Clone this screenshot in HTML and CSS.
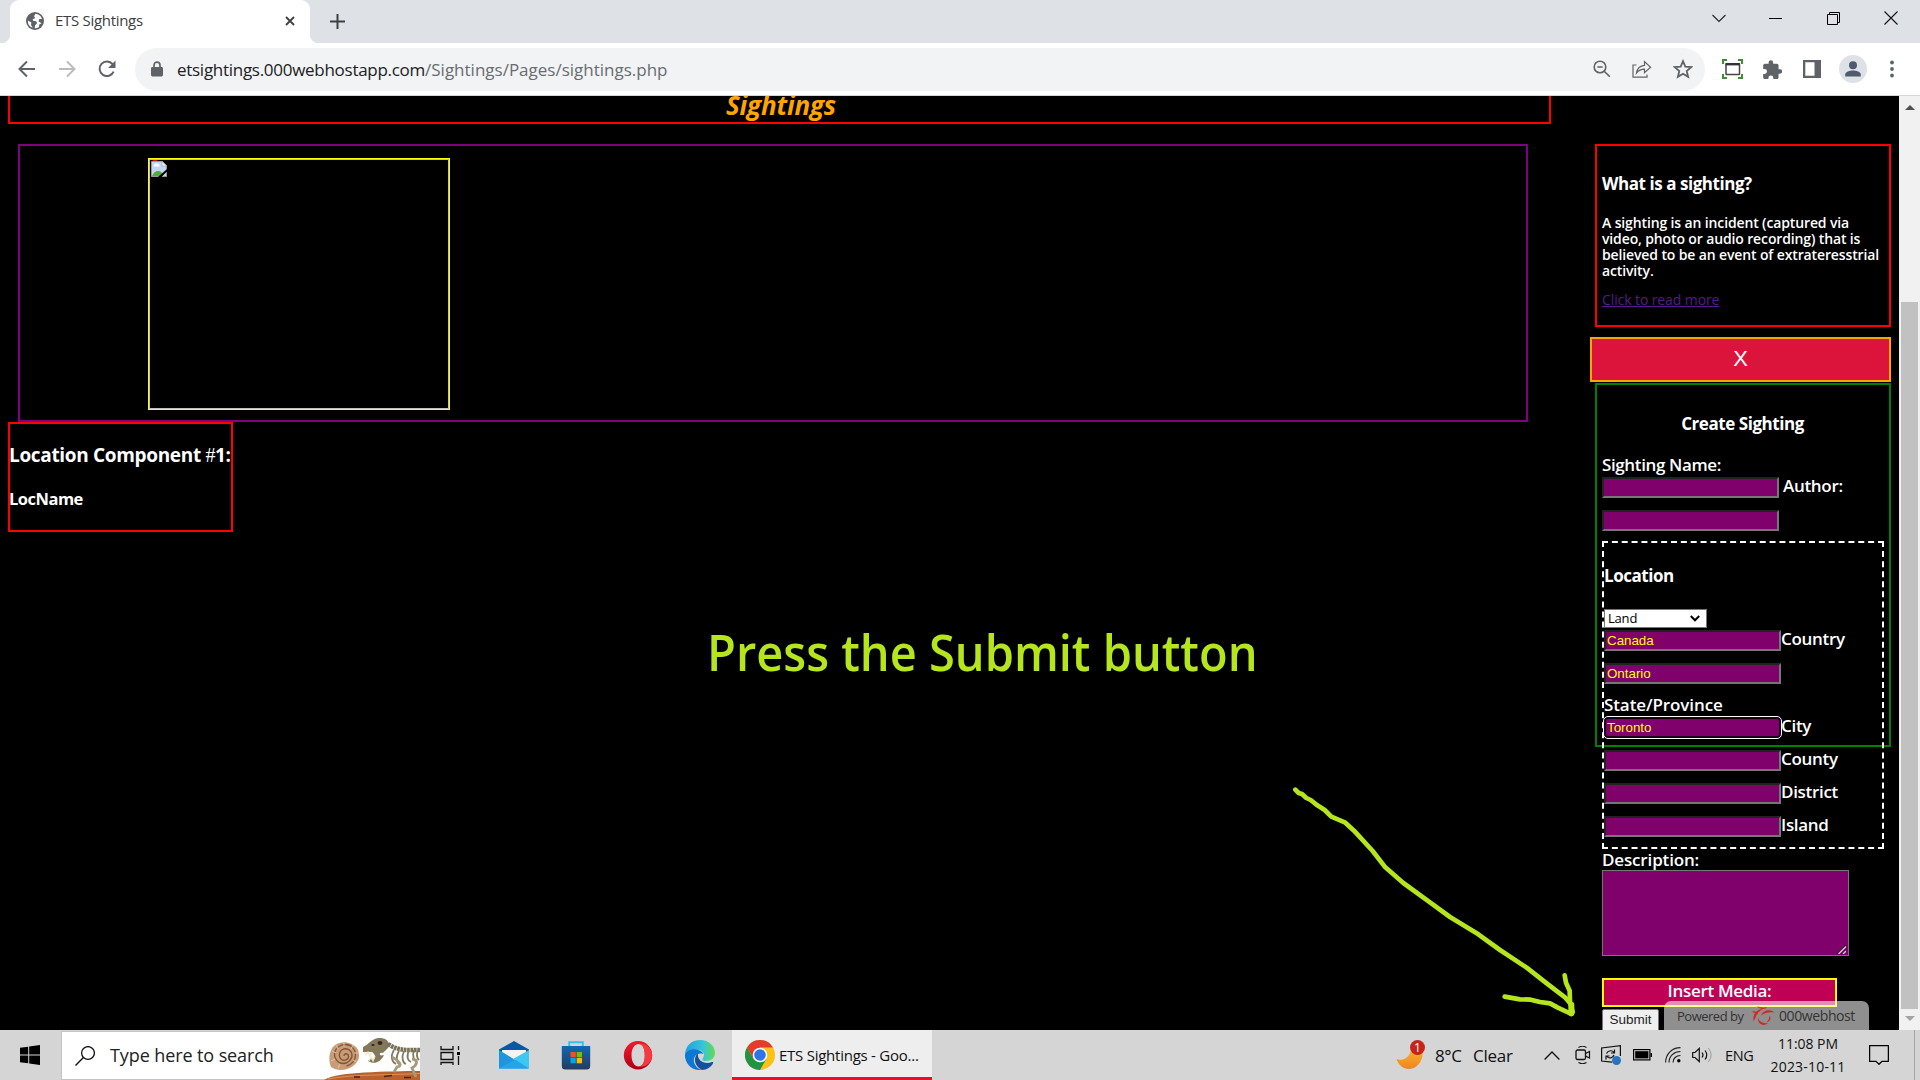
FILE: index.html
```html
<!DOCTYPE html>
<html lang="en">
<head>
<meta charset="utf-8">
<title>ETS Sightings</title>
<link rel="stylesheet" href="styles.css">
</head>
<body>
<div class="screen">
  <header class="tabstrip">
    <div class="tab">
      <svg class="tab-globe" viewBox="0 0 18 18"><circle cx="9" cy="9" r="9" fill="#5f6368"/><path d="M9.5 1.8 8 4.2 9.3 6 6.8 7.2 7 8.8 10 9.2 11.2 11 9 13.4 8.7 16.2A7.2 7.2 0 0 0 13 15L13.2 12.6 15.6 11.2 12.6 9.4 13.2 7 16 7A7.2 7.2 0 0 0 12.3 2.6ZM1.9 8.4 5.3 10.6 5 13 6.8 15.8A7.2 7.2 0 0 1 1.9 8.4Z" fill="#fff"/></svg>
      <span class="tab-title">ETS Sightings</span>
      <svg class="tab-close" viewBox="0 0 10 10"><path d="M1 1 9 9M9 1 1 9" stroke="#3c4043" stroke-width="1.8"/></svg>
    </div>
    <svg class="tab-new" viewBox="0 0 15 15"><path d="M7.5 0V15M0 7.5H15" stroke="#3c4043" stroke-width="2"/></svg>
    <div class="win-buttons">
      <svg width="14" height="14" viewBox="0 0 14 14"><path d="M.5 4 7 10.5 13.5 4" fill="none" stroke="#222" stroke-width="1.1"/></svg>
      <svg width="14" height="14" viewBox="0 0 14 14"><path d="M0 7.5H13" stroke="#000"/></svg>
      <svg width="14" height="14" viewBox="0 0 14 14"><path d="M.5 3.5H10.5V13.5H.5ZM2.5 3.5V1.5H12.5V11.5H10.5" fill="none" stroke="#000"/></svg>
      <svg width="14" height="14" viewBox="0 0 14 14"><path d="M.5 .5 13.5 13.5M13.5 .5 .5 13.5" stroke="#111" stroke-width="1.1"/></svg>
    </div>
  </header>

  <div class="toolbar">
    <svg class="nav-back" viewBox="0 0 18 18"><path d="M17 9H2M9 1.5 1.5 9 9 16.5" fill="none" stroke="#5f6368" stroke-width="2"/></svg>
    <svg class="nav-forward" viewBox="0 0 18 18"><path d="M1 9H16M9 1.5 16.5 9 9 16.5" fill="none" stroke="#babcbe" stroke-width="2"/></svg>
    <svg class="nav-reload" viewBox="0 0 18 18"><path d="M15.6 11.6A7.3 7.3 0 1 1 14.6 4.2" fill="none" stroke="#5f6368" stroke-width="2"/><path d="M17.5 .6V8H10.1Z" fill="#5f6368"/></svg>
    <div class="omnibox">
      <svg class="lock" viewBox="0 0 12 16"><rect x="0" y="6" width="12" height="9.5" rx="1.4" fill="#5f6368"/><path d="M3 6V4.2a3 3 0 0 1 6 0V6" fill="none" stroke="#5f6368" stroke-width="1.7"/></svg>
      <span class="url-host">etsightings.000webhostapp.com</span><span class="url-path">/Sightings/Pages/sightings.php</span>
      <div class="omni-actions">
        <svg width="18" height="18" viewBox="0 0 18 18"><circle cx="7" cy="7" r="5.8" fill="none" stroke="#5f6368" stroke-width="1.6"/><path d="M4.3 7H9.7M11.2 11.2 16.8 16.8" stroke="#5f6368" stroke-width="1.6"/></svg>
        <svg width="20" height="18" viewBox="0 0 20 18"><path d="M4.5 5H1V17.2H15V14.5M4.500 13C5.200 8.500 8 5.800 12.500 5.400V1.600L18.600 7.300 12.500 12.600V9.200C9 9.200 6.800 10.200 4.500 13Z" fill="none" stroke="#5f6368" stroke-width="1.2"/></svg>
        <svg width="20" height="20" viewBox="0 0 20 20"><path d="M10 2.2 12.3 7.6 18.2 8.1 13.7 12 15.1 17.8 10 14.7 4.9 17.8 6.3 12 1.8 8.1 7.7 7.6Z" fill="none" stroke="#5f6368" stroke-width="1.8"/></svg>
      </div>
    </div>
    <svg class="ext-capture" viewBox="0 0 21 20"><path d="M1 5V1H5M16 1H20V5M20 15V19H16M5 19H1V15" fill="none" stroke="#3f8f34" stroke-width="2.2"/><rect x="4" y="5" width="13.5" height="10.5" rx=".8" fill="none" stroke="#444" stroke-width="1.5"/><path d="M3.5 5.2H18" stroke="#333" stroke-width="2.4"/></svg>
    <svg class="ext-puzzle" viewBox="1.8 0.8 21 21"><path d="M20.5 11H19V7a2 2 0 0 0-2-2h-4V3.500a2.500 2.500 0 0 0-5 0V5H4a2 2 0 0 0-2 2v3.800h1.500a2.700 2.700 0 0 1 0 5.400H2V20a2 2 0 0 0 2 2h3.800v-1.500a2.700 2.700 0 0 1 5.400 0V22H17a2 2 0 0 0 2-2v-4h1.500a2.500 2.500 0 0 0 0-5Z" fill="#5f6368"/></svg>
    <svg class="ext-panel" viewBox="0 0 18 18"><path d="M0 0H18V18H0ZM2.300 2.300V15.700H11.500V2.300Z" fill="#5f6368" fill-rule="evenodd"/></svg>
    <svg class="avatar" viewBox="0 0 28 28"><circle cx="14" cy="14" r="14" fill="#dee1e6"/><circle cx="14" cy="10.200" r="4" fill="#4e5a70"/><path d="M6.200 21.500V19.500C6.200 16.800 11 15.500 14 15.500S21.800 16.800 21.800 19.500V21.500Z" fill="#4e5a70"/></svg>
    <svg class="menu-dots" viewBox="0 0 4 18"><circle cx="2" cy="2.500" r="1.900" fill="#5f6368"/><circle cx="2" cy="9" r="1.900" fill="#5f6368"/><circle cx="2" cy="15.500" r="1.900" fill="#5f6368"/></svg>
  </div>

  <div class="viewport">
    <main class="page">
      <div class="main-col">
        <div class="banner"><h1>Sightings</h1></div>
        <div class="gallery">
          <div class="photo">
            <svg width="16" height="17" viewBox="0 0 16 17"><path d="M2 .5H6" stroke="red" /><path d="M.5 1.500H11.500L15.500 5.500V16.500H.5Z" fill="#c3d6f5" stroke="#999"/><path d="M11 1.500V6H15.500Z" fill="#fff" stroke="#aaa" stroke-width=".8"/><path d="M3 6.500a1.500 1.500 0 0 1 1-2.500 1.700 1.700 0 0 1 3 .3 1.200 1.200 0 0 1 1 2.200Z" fill="#fff"/><path d="M1 16C3 10.500 9 9 12 14V16Z" fill="#54ad3a"/><path d="M7 17 16 9V11.500L10.500 17Z" fill="#000"/></svg>
          </div>
        </div>
        <div class="location-card">
          <h2>Location Component <span class="hash">#</span>1:</h2>
          <h3>LocName</h3>
        </div>
      </div>
      <aside class="sidebar">
        <section class="about">
          <h3>What is a sighting?</h3>
          <p>A sighting is an incident (captured via<br>video, photo or audio recording) that is<br>believed to be an event of extrateresstrial<br>activity.</p>
          <a>Click to read more</a>
        </section>
        <div class="close-form">X</div>
        <section class="create">
          <h3 class="centered">Create Sighting</h3>
          <div class="label-row">Sighting Name:</div>
          <div class="row"><div class="field"></div><span class="author">Author:</span></div>
          <div class="row"><div class="field"></div></div>
          <div class="location-set">
            <h3 class="loc-title">Location</h3>
            <div class="select">Land<svg width="10" height="7" viewBox="0 0 10 7"><path d="M.8 1 5 5.300 9.200 1" fill="none" stroke="#000" stroke-width="2"/></svg></div>
            <div class="row"><div class="field">Canada</div>Country</div>
            <div class="row"><div class="field">Ontario</div></div>
            <div class="label-row state">State/Province</div>
            <div class="row"><div class="field focused">Toronto</div>City</div>
            <div class="row"><div class="field"></div>County</div>
            <div class="row"><div class="field"></div>District</div>
            <div class="row"><div class="field"></div>Island</div>
          </div>
          <div class="label-row desc">Description:</div>
          <div class="textarea"><svg width="10" height="10" viewBox="0 0 10 10"><path d="M1 10 10 1M5.500 10 10 5.500" stroke="#222" stroke-width="1.200"/><path d="M2.500 10 10 2.500M7 10 10 7" stroke="#e0c8dc" stroke-width="1.400"/></svg></div>
          <div class="media">Insert Media:</div>
          <div class="submit">Submit</div>
        </section>
      </aside>
      <div class="powered">
        <span class="powered-by">Powered by</span>
        <svg width="24" height="20" viewBox="0 0 24 20"><g fill="#d2281e"><path d="M.5 6C3 4.600 6.500 5.500 6.800 9 5.500 7.200 3.500 6.500.5 6Z"/><path d="M2.500 15C1.500 9 5 3.200 12 3 8 5.200 5 8.500 4.500 12Z"/><path d="M6 .3C9 1.800 13 2 16 1.300 14.500 3.400 9 4 6 .3Z"/><path d="M10 9.500C12 4.500 19 2.500 23.500 6.500 18.500 5.800 14 6.800 10 9.500Z"/><path d="M7 11.500C8 15.500 11.500 17.500 17 17.200 12 20.800 6.500 18.500 7 11.500Z"/><path d="M18.500 9.500C20.500 12 19.500 15.500 15.500 16.200 17.500 14.500 18.500 12.500 18.500 9.500Z"/></g></svg>
        <span class="powered-name">000webhost</span>
      </div>
    </main>
    <div class="scrollbar">
      <svg class="arrow-up" viewBox="0 0 10 5"><path d="M0 5 5 0 10 5Z" fill="#505050"/></svg>
      <div class="thumb"></div>
      <svg class="arrow-down" viewBox="0 0 10 5"><path d="M0 0 5 5 10 0Z" fill="#a3a3a3"/></svg>
    </div>
  </div>

  <footer class="taskbar">
    <svg class="start" viewBox="0 0 20 20"><path d="M0 2.800 8.200 1.700V9.400H0ZM9.200 1.500 20 0V9.400H9.200ZM0 10.400H8.200V18.300L0 17.200ZM9.200 10.400H20V20L9.200 18.500Z"/></svg>
    <div class="search">
      <svg class="magnifier" viewBox="0 0 20 20"><circle cx="13" cy="7" r="6.400" fill="none" stroke="#111" stroke-width="1.300"/><path d="M8.400 11.600.5 19.500" stroke="#111" stroke-width="1.400"/></svg>
      <span class="search-text">Type here to search</span>
      <svg class="fossils" viewBox="0 0 96 46">
        <path d="M0 46C8 41 24 39.500 40 38.500C60 37.500 80 37 96 37V46Z" fill="#b9622e"/><path d="M4 45C30 40 60 41.500 96 39.500" stroke="#e09355" fill="none"/><path d="M30 43h6M60 42.500l8-1M80 43.500h7" stroke="#4b2413" stroke-width="1.500"/>
        <g transform="translate(-1 -3)"><path d="M8 36C5 29 6 19 12 14C19 9 29 11 34 17C38 24 36 31 30 35C23 40 14 40 8 36Z" fill="#c99c76"/>
        <path d="M21 25c0-3 4-3 4.500 0s-4 5.500-7 3.500-3-8 1-10 9 .5 9.500 5-4 9-9 9-9-5-8.500-10 5-9 11-9 10 5 10 10.500-4 10-9 11" fill="none" stroke="#805639" stroke-width="1.300"/>
        <path d="M13 14l2 4M21 11.500v4M30 14l-2 4M35 22h-4M34 31l-4-2M9 20l4 2M8 30l4-2M15 37l2-4" stroke="#e4c5a5"/></g>
        <g transform="translate(0 -4)"><path d="M39 17C44 15 47 10 52 8.500C58 7 64 9 65 14C66 18 61 20 59 23C54 22 55 27 60 25C57 32 50 35 44 31L46 29C52 31 53 26 48 22L39 22Z" fill="#83795a"/>
        <path d="M40 22l2 3 2-3 2 4 2-4M45 31l2-4 2 4 2-5" fill="none" stroke="#efe6c8" stroke-width="1.200"/><ellipse cx="56" cy="13" rx="2.500" ry="2" fill="#2d281d"/><ellipse cx="49" cy="15" rx="1.700" ry="1" fill="#2d281d"/>
        <path d="M64 14C74 21 84 20 96 20" fill="none" stroke="#777158" stroke-width="4.500" stroke-dasharray="2.800 .6"/>
        <path d="M70 20c-4 7-2 12 2 14M75 21c-4 7-2 13 2 14M80 21c-3 7-1 12 2 13M85 20c-3 7-1 11 2 12M90 20c-2 6 0 10 2 11M94 20c-2 5-1 8 1 10" fill="none" stroke="#837b60" stroke-width="1.800"/>
        <path d="M68 27C74 30 80 36 73 37L70 42M88 29C95 30 93 35 88 38L92 47" fill="none" stroke="#a39b7c" stroke-width="2.800"/></g>
      </svg>
    </div>
    <svg class="taskview" viewBox="0 0 20 19"><path d="M1 0V3.500H13V0M1 6.500H13V13.500H1ZM1 19V16.500H13V19M18.500 0V4M18.500 10V19" fill="none" stroke="#111" stroke-width="1.300"/><rect x="17" y="6" width="3" height="3"/></svg>
    <svg class="app" viewBox="0 0 30 30"><path d="M0 9.500 15 1 30 9.500V14H0Z" fill="#0a58a4"/><path d="M3 10H27V16L15 22 3 16Z" fill="#f4f4f4"/><path d="M0 10 30 28.500H0Z" fill="#2095de"/><path d="M30 10V28.500L14 19Z" fill="#3dc8f3"/><path d="M0 28.500 16 19.500 30 28.500Z" fill="#25a4e8"/></svg>
    <svg class="app" viewBox="0 0 30 30"><defs><linearGradient id="st" x2="0" y2="1"><stop stop-color="#1267b4"/><stop offset="1" stop-color="#243b60"/></linearGradient></defs><path d="M8.200 7V2.200H21.800V7" fill="none" stroke="#35c1f1" stroke-width="2"/><path d="M.8 6H29.200V26a3.500 3.500 0 0 1-3.500 3.500H4.300A3.500 3.500 0 0 1 .8 26Z" fill="url(#st)"/><rect x="9.500" y="12" width="5.300" height="5.300" fill="#f25022"/><rect x="15.700" y="12" width="5.300" height="5.300" fill="#7fba00"/><rect x="9.500" y="18" width="5.300" height="5.300" fill="#00a4ef"/><rect x="15.700" y="18" width="5.300" height="5.300" fill="#ffb900"/></svg>
    <svg class="app" viewBox="0 0 30 30"><defs><linearGradient id="op" x2=".3" y2="1"><stop stop-color="#ff1b2d"/><stop offset="1" stop-color="#a70014"/></linearGradient></defs><path d="M15 1A14.200 14.200 0 1 0 15 29.400 14.200 14.200 0 1 0 15 1ZM15.500 4C20 4 21.800 9 21.800 15.200S20 26.400 15.500 26.400 8.500 21 8.500 15.200 11 4 15.500 4Z" fill="url(#op)" fill-rule="evenodd"/><path d="M15.500 4C22 2 29.200 8 29.200 15.200S22 28.500 15.500 26.400C20 26.400 21.800 21 21.800 15.200S20 4 15.500 4Z" fill="#f5393f"/></svg>
    <svg class="app" viewBox="0 0 30 30"><defs><linearGradient id="eg"><stop stop-color="#249fe0"/><stop offset=".6" stop-color="#35c5d8"/><stop offset="1" stop-color="#64dc4c"/></linearGradient></defs><path d="M0 14C1 5 7 0 15 0 24 0 30 6 30 13C30 18 26 21 21 21C17 21 17 19 18.500 17C20 14 18 10 13 10C7 10 2 13 0 19Z" fill="url(#eg)"/><path d="M0 15C2 10 8 8 13 10C17 11 18 13 18 14C12 12 8 17 9 22C10 26 13 29 17 30C7 31 0 24 0 15Z" fill="#0c78d3"/><path d="M13 13.500C8 17 9 26 17 30C22 30 26 27 28 23.500C28.500 22 28 21.800 27 22C20 25 12 21 13 13.500Z" fill="#1151a0"/></svg>
    <div class="running">
      <svg class="chrome" viewBox="0 0 30 30"><circle cx="15" cy="15" r="15" fill="#fbc116"/><path d="M15 15 8.500 18.700 2 7.500A15 15 0 0 1 28 7.500L15 7.500Z" fill="#e33b2e"/><path d="M2 7.500 8.500 18.800 15 22.500 21.500 18.800 15 30A15 15 0 0 1 2 7.500Z" fill="#229342"/><circle cx="15" cy="15" r="7.300" fill="#fff"/><circle cx="15" cy="15" r="5.800" fill="#2e75ea"/></svg>
      <span>ETS Sightings - Goo...</span>
    </div>
    <div class="tray">
      <svg class="moon" viewBox="0 0 30 30"><defs><linearGradient id="mo" x2="0" y2="1"><stop stop-color="#f9b62a"/><stop offset="1" stop-color="#f08325"/></linearGradient></defs><path d="M.5 19C7 21.500 15 17 15 8L26 9C29 18 22 29 13 29 7 29 2.500 25 .5 19Z" fill="url(#mo)"/><circle cx="21.500" cy="7.500" r="7.500" fill="#c4261e"/><text x="21.500" y="11.500" text-anchor="middle" class="moon-num">1</text></svg>
      <span class="temp">8°C</span><span class="sky">Clear</span>
      <svg class="t-chev" viewBox="0 0 16 9"><path d="M.6 8.500 8 1 15.400 8.500" fill="none" stroke="#111" stroke-width="1.300"/></svg>
      <svg class="t-cam" viewBox="0 0 16 18"><path d="M3.500 1.500C6 0 9 0 11.500 1.500M3.500 16.500C6 18 9 18 11.500 16.500" fill="none" stroke="#111" stroke-width="1.100"/><rect x="1" y="4" width="9.500" height="9.500" rx="1.500" fill="none" stroke="#111" stroke-width="1.300"/><path d="M10.500 7.500 14.500 5.500V12L10.500 10" fill="none" stroke="#111" stroke-width="1.200"/></svg>
      <svg class="t-sync" viewBox="0 0 20 20"><path d="M11 17.200.6 16V3L19.400.7V11" fill="none" stroke="#111" stroke-width="1.200"/><path d="M5.500 8.500C7 5 11.500 5 13 7.500M13.500 4.500V8H10M13 10C12 13 8 14 6 11.500M5 14.500V11H8.500" fill="none" stroke="#111" stroke-width="1.200"/><circle cx="15.500" cy="15.500" r="4.500" fill="#2b73bd"/></svg>
      <svg class="t-bat" viewBox="0 0 19 12"><rect x=".6" y=".6" width="16.300" height="10.300" fill="none" stroke="#000" stroke-width="1.200"/><rect x="2.200" y="2.200" width="13.200" height="7.200"/><rect x="17.500" y="4" width="1.500" height="4"/></svg>
      <svg class="t-wifi" viewBox="0 0 16 16"><g fill="none" stroke="#222" stroke-width="1.200"><path d="M.6 15.500C.6 7 7 .6 15.500.6"/><path d="M4 15.500C4 9 9 4.500 15.500 4.500"/><path d="M8 15.500C8 11.500 11 8.500 15.500 8.500"/></g><circle cx="13.800" cy="13.800" r="1.700"/></svg>
      <svg class="t-vol" viewBox="0 0 20 16"><path d="M.7 5.500H3L7.300 1.500V14.500L3 10.500H.7Z" fill="none" stroke="#111" stroke-width="1.200"/><path d="M10 5.500Q12 8 10 10.500M13 3.500Q16.500 8 13 12.500" fill="none" stroke="#111" stroke-width="1.200"/><path d="M16.300 1Q22 8 16.300 15" fill="none" stroke="#999"/></svg>
      <span class="lang">ENG</span>
      <div class="clock"><span class="time">11:08 PM</span><span class="date">2023-10-11</span></div>
      <svg class="t-note" viewBox="0 0 20 20"><path d="M.6.6H19.400V16.400H13L10 19.300 7 16.400H.6Z" fill="none" stroke="#000" stroke-width="1.300"/></svg>
      <div class="show-desktop"></div>
    </div>
  </footer>

  <div class="note">Press the Submit button</div>
  <svg class="pointer" viewBox="0 0 990 780"><g fill="none" stroke="#b5e61d" stroke-width="14" stroke-linecap="round" stroke-linejoin="round"><path d="M76 59 86 69 96 72 109 84 122 90 142 106 164 120 184 140 226 158 252 182 308 243 346 292 400 339 480 397 540 441 625 493 690 540 770 593 835 644 885 682 902 702"/><path d="M884 616 888 638 899 662 900 695 908 726 904 732 862 712 840 700 810 696 782 689 750 688 704 680"/><path d="M904 704V730" stroke-width="18"/></g></svg>
</div>
</body>
</html>
```
FILE: styles.css
```css
* { box-sizing: border-box; }
body { margin: 0; background: #000; font-family: "Open Sans", "Noto Sans", sans-serif; }
svg { display: block; flex: none; }
h1, h2, h3, p { margin: 0; }
.screen { position: relative; width: 1920px; height: 1080px; overflow: hidden; display: flex; flex-direction: column; white-space: nowrap; }

/* Tab strip */
.tabstrip { height: 43px; flex: none; background: #dee1e6; display: flex; align-items: center; padding-left: 10px; }
.tab { position: relative; width: 300px; height: 43px; background: #fff; border-radius: 9px 9px 0 0; display: flex; align-items: center; padding: 0 15px 1px 16px; }
.tab::before, .tab::after { content: ""; position: absolute; bottom: 0; width: 9px; height: 9px; }
.tab::before { left: -9px; background: radial-gradient(circle at 0 0, #dee1e6 9px, #fff 9.500px); }
.tab::after { right: -9px; background: radial-gradient(circle at 100% 0, #dee1e6 9px, #fff 9.500px); }
.tab-globe { width: 18px; height: 18px; }
.tab-title { margin: 0 0 2px 11px; font-size: 15px; line-height: 20px; letter-spacing: -.3px; color: #3c4043; }
.tab-close { width: 10px; height: 10px; margin-left: auto; }
.tab-new { width: 15px; height: 15px; margin-left: 20px; }
.win-buttons { margin-left: auto; display: flex; gap: 43.500px; padding-right: 22px; margin-top: -7px; }

/* Toolbar */
.toolbar { height: 53px; flex: none; background: #fff; border-bottom: 1px solid #d5d7da; display: flex; align-items: center; padding-left: 18px; }
.nav-back, .nav-forward, .nav-reload { width: 18px; height: 18px; }
.nav-forward { margin-left: 22px; }
.nav-reload { margin-left: 22px; }
.omnibox { width: 1570px; height: 43px; margin-left: 19px; border-radius: 22px; background: #f1f3f4; display: flex; align-items: center; padding: 0 12px 0 16px; font-size: 17px; color: #202124; }
.lock { width: 12px; height: 16px; margin-right: 14px; }
.url-host { letter-spacing: -.28px; }
.url-path { letter-spacing: 0; color: #686c70; }
.omni-actions { margin-left: auto; display: flex; align-items: center; gap: 21px; }
.ext-capture { width: 21px; height: 20px; margin-left: 17px; }
.ext-puzzle { width: 19px; height: 19px; margin-left: 20px; }
.ext-panel { width: 18px; height: 18px; margin-left: 21px; }
.avatar { width: 28px; height: 28px; margin-left: 18px; }
.menu-dots { width: 4px; height: 18px; margin-left: 23px; }

/* Web page */
.viewport { height: 934px; flex: none; display: flex; background: #000; }
.page { position: relative; width: 1899px; height: 934px; overflow: hidden; display: flex; justify-content: space-between; padding: 0 8px; color: #fff; }
.main-col { width: 1543px; }
.banner { height: 28px; border: 2px solid #f00; border-top: 0; display: flex; justify-content: center; padding-left: 3px; }
.banner h1 { height: 26px; font: italic 700 26px/18px "Open Sans", sans-serif; letter-spacing: -.2px; color: orange; }
.gallery { width: 1510px; height: 278px; margin: 20px 0 0 10px; border: 2px solid purple; padding: 12px 0 0 128px; }
.photo { width: 302px; height: 252px; border: 1px solid #ff0; box-shadow: inset 0 0 0 1px #c0c0c0; padding: 1px 0 0 2px; }
.location-card { width: 225px; height: 110px; border: 2px solid #f00; padding-top: 19px; }
.location-card h2 { font-size: 19px; line-height: 24px; letter-spacing: -.33px; margin-left: -1px; }
.location-card h3 { margin: 22px 0 0 -1px; font-size: 16.500px; line-height: 20px; letter-spacing: -.5px; }
.hash { font: 400 20px/20px "Liberation Serif", serif; }

/* Sidebar */
.sidebar { width: 301px; padding-top: 48px; }
.sidebar h3 { height: 20px; font-size: 17px; line-height: 22px; letter-spacing: -.45px; }
.about { height: 183px; margin-left: 5px; border: 2px solid #f00; padding: 27px 0 0 5px; font-size: 14px; line-height: 16px; }
.about p { margin: 22px 0 13px; font-weight: 600; letter-spacing: -.13px; }
.about a { display: block; color: #551a8b; font-weight: 500; letter-spacing: -.1px; text-decoration: underline; }
.close-form { height: 45px; margin-top: 10px; border: 2px solid orange; background: #dc143c; font: 400 22px/40px "Liberation Sans", Arial, sans-serif; text-align: center; }
.create { height: 364px; margin: 1px 0 0 5px; border: 2px solid green; padding: 28px 5px 0; font-size: 17px; line-height: 22px; font-weight: 600; letter-spacing: -.3px; }
.create .centered { text-align: center; margin: 0 1px 21px 0; }
.label-row { height: 21px; letter-spacing: -.38px; }
.state { letter-spacing: -.1px; }
.desc { letter-spacing: -.15px; }
.row { height: 33px; display: flex; align-items: flex-start; }
.field { width: 177px; height: 21px; flex: none; margin-top: 2px; border: 2px solid; border-color: #222 #767676 #767676 #222; background: #80006c; color: #ff0; padding-left: 1px; font: 400 13.333px/17px "Liberation Sans", Arial, sans-serif; letter-spacing: 0; }
.focused { border-color: #1a0016; border-radius: 4px; outline: 1px solid #fff; }
.author { margin-left: 4px; }
.location-set { width: 282px; height: 308px; border: 2px dashed #fff; padding-top: 22px; }
.loc-title { margin-bottom: 24px; }
.select { width: 103px; height: 19px; background: #fff; border: 1px solid #767676; color: #000; display: flex; align-items: center; justify-content: space-between; padding: 0 6px 1px 3px; font-size: 13px; font-weight: 400; letter-spacing: -.2px; }
.textarea { width: 247px; height: 86px; border: 1px solid #767676; background: #80006c; display: flex; justify-content: flex-end; align-items: flex-end; padding: 1px 2px; }
.media { width: 235px; height: 29px; margin-top: 22px; border: 2px solid #ff0; background: #c00054; text-align: center; }
.submit { width: 57px; height: 24px; margin-top: 2px; border: 1px solid #767676; border-radius: 2px; background: #efefef; color: #222; font: 400 13.500px/19px "Liberation Sans", Arial, sans-serif; letter-spacing: 0; text-align: center; }
.powered { position: absolute; left: 1664px; bottom: 0; width: 205px; height: 29px; border-radius: 7px 7px 0 0; background: rgba(255, 255, 255, .56); color: #333; display: flex; align-items: center; padding-left: 13px; }
.powered-by { width: 74px; font-size: 13px; letter-spacing: -.5px; }
.powered-name { margin-left: 4px; font-size: 14px; letter-spacing: -.4px; }
.scrollbar { width: 21px; background: #f1f1f1; display: flex; flex-direction: column; align-items: center; }
.arrow-up { width: 10px; height: 5px; margin-top: 9px; }
.thumb { width: 17px; height: 707px; margin-top: 192px; background: #c1c1c1; }
.arrow-down { width: 10px; height: 5px; margin-top: 7px; }

/* Taskbar */
.taskbar { height: 50px; flex: none; background: #d5d5d5; display: flex; align-items: center; padding-left: 20px; color: #111; }
.start { width: 20px; height: 20px; }
.search { width: 359px; height: 49px; margin: 1px 0 0 21px; background: #fff; border: 1px solid #c4c4c4; border-right: 0; display: flex; align-items: center; padding-left: 13px; font-size: 18px; letter-spacing: -.1px; color: #222; }
.search-text { margin-bottom: 2px; }
.magnifier { width: 20px; height: 20px; margin-right: 15px; }
.fossils { width: 96px; height: 46px; margin: 2px 0 0 auto; }
.taskview { width: 20px; height: 19px; margin: 0 39px 0 20px; }
.app { width: 30px; height: 30px; margin-right: 32px; }
.running { width: 200px; height: 50px; margin-left: -15px; background: #eee; border-bottom: 3px solid #e81123; display: flex; align-items: center; padding: 2px 0 0 13px; font-size: 15px; letter-spacing: -.25px; }
.chrome { width: 30px; height: 30px; margin-right: 4px; }
.tray { flex: 1; height: 50px; display: flex; align-items: center; padding-left: 464px; }
.moon { width: 30px; height: 30px; }
.moon-num { font: 400 12px "Open Sans", sans-serif; fill: #fff; }
.temp { width: 38px; margin-left: 9px; font-size: 17px; letter-spacing: -.4px; }
.sky { width: 71px; font-size: 17px; letter-spacing: -.25px; }
.t-chev { width: 16px; height: 9px; }
.t-cam { width: 16px; height: 18px; margin-left: 15px; }
.t-sync { width: 20px; height: 20px; margin-left: 10px; }
.t-bat { width: 19px; height: 12px; margin-left: 12px; }
.t-wifi { width: 16px; height: 16px; margin-left: 13px; }
.t-vol { width: 20px; height: 16px; margin-left: 11px; }
.lang { width: 45px; margin-left: 13px; font-size: 14.500px; letter-spacing: -.4px; }
.clock { width: 76px; display: flex; flex-direction: column; align-items: center; font-size: 14px; line-height: 23px; }
.time { letter-spacing: -.05px; }
.date { letter-spacing: .2px; }
.t-note { width: 20px; height: 20px; margin-left: 23px; }
.show-desktop { width: 1px; height: 50px; margin-left: 25px; background: #a5a5a5; }

/* Annotation drawn over the window */
.note { position: absolute; left: 707px; top: 618px; font-size: 50px; line-height: 68px; font-weight: 600; color: #b5e61d; transform: scaleX(.94); transform-origin: 0 0; }
.pointer { position: absolute; left: 1270px; top: 770px; width: 330px; height: 260px; }
```
